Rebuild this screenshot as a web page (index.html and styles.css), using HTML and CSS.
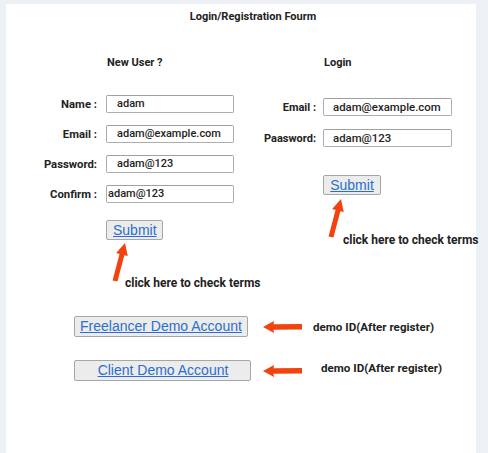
FILE: index.html
```html
<!DOCTYPE html>
<html>
<head>
<meta charset="utf-8">
<link rel="stylesheet" href="styles.css">
</head>
<body>
<div class="panel">
  <h1 class="title">Login/Registration Fourm</h1>
  <div class="columns">
    <div class="col col-left">
      <h2 class="heading heading-left">New User ?</h2>
      <div class="form form-left">
        <label class="lbl">Name :</label><div class="field">adam</div>
        <label class="lbl">Email :</label><div class="field">adam@example.com</div>
        <label class="lbl">Password:</label><div class="field">adam@123</div>
        <label class="lbl">Confirm :</label><div class="field field-tight">adam@123</div>
      </div>
      <button class="btn submit submit-left"><span>Submit</span></button>
      <div class="terms terms-left">
        <svg class="up-arrow" width="18" height="40" viewBox="0 0 18 40"><polygon points="13,1 15.75,14.1 12.37,13.24 5.42,39.6 0.58,38.4 7.53,11.97 4.15,11.1" fill="#f2430f"/></svg>
        <span class="terms-text">click here to check terms</span>
      </div>
    </div>
    <div class="col col-right">
      <h2 class="heading heading-right">Login</h2>
      <div class="form form-right">
        <label class="lbl">Email :</label><div class="field">adam@example.com</div>
        <label class="lbl">Paasword:</label><div class="field">adam@123</div>
      </div>
      <button class="btn submit submit-right"><span>Submit</span></button>
      <div class="terms terms-right">
        <svg class="up-arrow" width="18" height="40" viewBox="0 0 18 40"><polygon points="13,1 15.75,14.1 12.37,13.24 5.42,39.6 0.58,38.4 7.53,11.97 4.15,11.1" fill="#f2430f"/></svg>
        <span class="terms-text">click here to check terms</span>
      </div>
    </div>
  </div>
  <div class="demo">
    <div class="demo-row demo-row-1">
      <button class="btn demo-btn demo-freelancer"><span>Freelancer Demo Account</span></button>
      <svg class="left-arrow" width="40" height="12" viewBox="0 0 40 12"><polygon points="0,6 11,0 10.5,3.2 39,3 39,8.6 10.5,8.8 11,12" fill="#f2430f"/></svg>
      <span class="demo-text">demo ID(After register)</span>
    </div>
    <div class="demo-row demo-row-2">
      <button class="btn demo-btn demo-client"><span>Client Demo Account</span></button>
      <svg class="left-arrow" width="40" height="12" viewBox="0 0 40 12"><polygon points="0,6 11,0 10.5,3.2 39,3 39,8.6 10.5,8.8 11,12" fill="#f2430f"/></svg>
      <span class="demo-text demo-text-2">demo ID(After register)</span>
    </div>
  </div>
</div>
</body>
</html>
```
FILE: styles.css
```css
html, body {
  margin: 0;
  padding: 0;
}
body {
  background: #edf0f5;
  font-family: Roboto, "Liberation Sans", Arial, sans-serif;
  color: #222;
}
.panel {
  margin: 4px 12px 0 6px;
  background: #fff;
  height: 449px;
  padding-top: 6px;
  box-sizing: border-box;
}
.title {
  margin: 0;
  padding-left: 24px;
  text-align: center;
  font-size: 11px;
  line-height: 13px;
  font-weight: 700;
}
.columns {
  display: flex;
}
.col {
  display: flex;
  flex-direction: column;
  align-items: flex-start;
}
.col-left {
  width: 240px;
}
.col-right {
  flex: 1;
}
.heading {
  margin: 33px 0 0 0;
  font-size: 11px;
  line-height: 13px;
  font-weight: 700;
}
.heading-left {
  margin-left: 101px;
}
.heading-right {
  margin-left: 78px;
}
.form {
  display: grid;
  align-items: center;
}
.form-left {
  margin-top: 26px;
  grid-template-columns: 91px 128px;
  column-gap: 9px;
  row-gap: 12px;
}
.form-right {
  margin-top: 29px;
  grid-template-columns: 70px 129px;
  column-gap: 7px;
  row-gap: 13px;
}
.lbl {
  text-align: right;
  font-size: 11px;
  font-weight: 700;
  line-height: 13px;
}
.form-left .lbl {
  font-size: 11.3px;
}
.field {
  box-sizing: border-box;
  height: 18px;
  border: 1px solid #adadad;
  border-top-color: #a0a0a0;
  border-radius: 2px;
  padding-left: 10px;
  font-size: 11px;
  font-weight: 500;
  line-height: 16px;
  color: #1e1e1e;
  white-space: nowrap;
}
.form-right .field {
  font-size: 11.4px;
  padding-left: 9px;
}
.field-tight {
  padding-left: 1px;
}
.btn {
  box-sizing: border-box;
  background: #ececec;
  border: 1px solid #a6a6a6;
  border-radius: 2px;
  font-family: "Liberation Sans", Arial, sans-serif;
  font-size: 14px;
  color: #2b6fce;
  padding: 0 6px;
  margin: 0;
  line-height: 18px;
  cursor: pointer;
}
.btn span {
  text-decoration: underline;
}
.submit {
  height: 20px;
}
.submit-left {
  margin-top: 17px;
  margin-left: 100px;
  width: 57px;
}
.submit-right {
  margin-top: 28px;
  margin-left: 77px;
  width: 58px;
}
.terms {
  display: flex;
  align-items: flex-end;
  height: 40px;
}
.terms-left {
  margin-top: 2px;
  margin-left: 106px;
}
.terms-right {
  margin-top: 3px;
  margin-left: 82px;
}
.terms-text {
  font-size: 12px;
  font-weight: 700;
  line-height: 14px;
  white-space: nowrap;
  margin-left: -5px;
  margin-bottom: -8px;
}
.terms-right .terms-text {
  margin-left: -3px;
  margin-bottom: -9px;
}
.up-arrow {
  display: block;
  flex: none;
}
.demo {
  margin-top: 34px;
  display: flex;
  flex-direction: column;
  gap: 23px;
}
.demo-row {
  display: flex;
  align-items: center;
  margin-left: 68px;
}
.demo-btn {
  height: 21px;
  line-height: 19px;
}
.demo-freelancer {
  padding: 0 4px 0 5px;
  width: 174px;
  text-align: left;
}
.demo-client {
  width: 177px;
  padding: 0 21px 0 22px;
}
.left-arrow {
  display: block;
  flex: none;
}
.demo-row-1 .left-arrow {
  margin-left: 15px;
}
.demo-row-2 .left-arrow {
  margin-left: 12px;
}
.demo-text {
  font-size: 11.6px;
  font-weight: 700;
  line-height: 14px;
  margin-left: 10px;
  white-space: nowrap;
}
.demo-text-2 {
  margin-left: 18px;
  margin-top: -5px;
}
```
